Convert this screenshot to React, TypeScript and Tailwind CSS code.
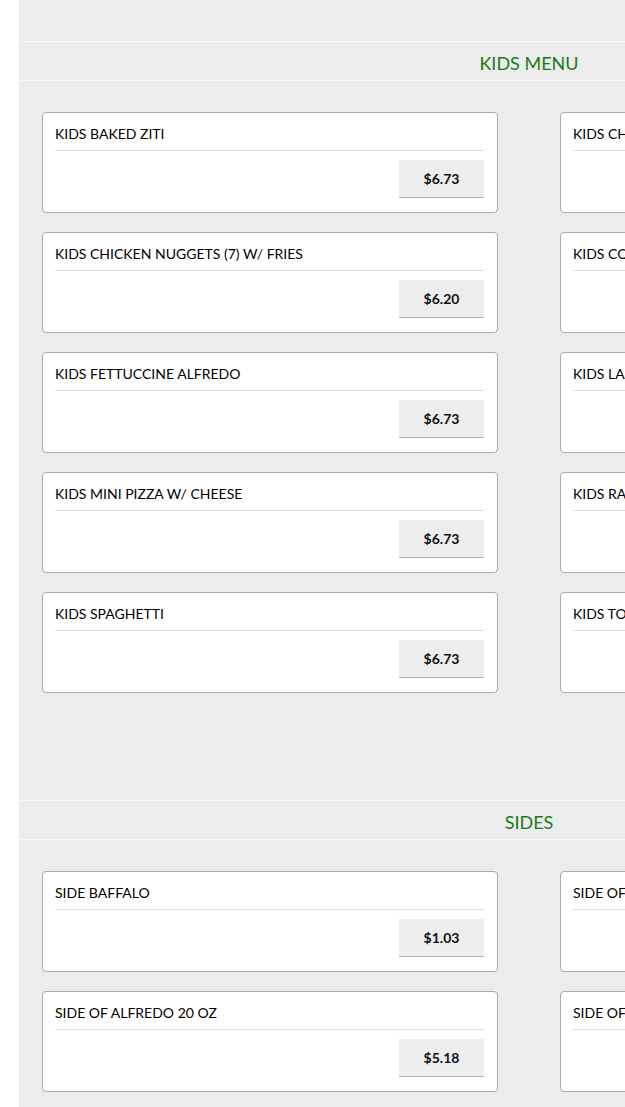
const sections = [
  {
    title: "KIDS MENU",
    items: [
      { name: "KIDS BAKED ZITI", price: "$6.73" },
      { name: "KIDS CHEESE RAVIOLI", price: "$6.73" },
      { name: "KIDS CHICKEN NUGGETS (7) W/ FRIES", price: "$6.20" },
      { name: "KIDS CORN DOG W/ FRIES", price: "$6.20" },
      { name: "KIDS FETTUCCINE ALFREDO", price: "$6.73" },
      { name: "KIDS LASAGNA", price: "$6.73" },
      { name: "KIDS MINI PIZZA W/ CHEESE", price: "$6.73" },
      { name: "KIDS RAVIOLI", price: "$6.73" },
      { name: "KIDS SPAGHETTI", price: "$6.73" },
      { name: "KIDS TORTELLINI", price: "$6.73" },
    ],
  },
  {
    title: "SIDES",
    items: [
      { name: "SIDE BAFFALO", price: "$1.03" },
      { name: "SIDE OF ALFREDO 8 OZ", price: "$2.59" },
      { name: "SIDE OF ALFREDO 20 OZ", price: "$5.18" },
      { name: "SIDE OF BREAD", price: "$1.03" },
    ],
  },
];

function ItemCard({ name, price }: { name: string; price: string }) {
  return (
    <div className="h-[101px] rounded-[4px] border border-[#a9a9a9] bg-white pl-3 pr-[13px] pt-[11px]">
      <div className="h-[27px] border-b border-[#dcdcdc] text-[14px] leading-5 text-black">{name}</div>
      <div className="mt-[9px] flex justify-end">
        <button className="h-[38px] w-[85px] border-b border-[#b5b5b5] bg-[#ededed] text-[14px] font-bold text-[#111]">
          {price}
        </button>
      </div>
    </div>
  );
}

export default function App() {
  return (
    <div className="w-full overflow-hidden bg-white" style={{ fontFamily: "Lato, 'Open Sans', sans-serif" }}>
      <div className="ml-[19px] w-[1020px] bg-[#ececec]">
        {sections.map((section) => (
          <section key={section.title} className="pt-[41px] pb-[66px] last:pb-[40px]">
            <div className="flex h-10 items-center justify-center border-y border-[#f7f7f7] pt-1 text-[18px] text-[#1b7a1b]">
              {section.title}
            </div>
            <div className="grid grid-cols-2 gap-x-[62px] gap-y-[19px] px-[23px] pt-[31px]">
              {section.items.map((item) => (
                <ItemCard key={item.name} {...item} />
              ))}
            </div>
          </section>
        ))}
      </div>
    </div>
  );
}
